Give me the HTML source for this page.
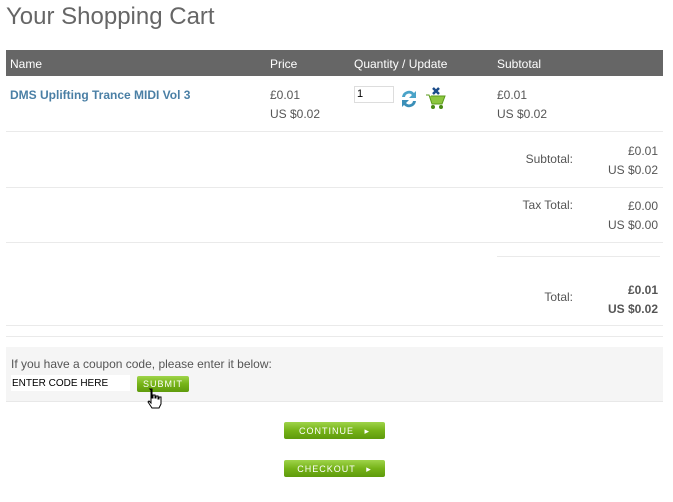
<!DOCTYPE html>
<html><head><meta charset="utf-8"><style>
body{margin:0;width:673px;height:502px;background:#fff;font-family:"Liberation Sans",Arial,sans-serif;font-size:12px;color:#555;position:relative;overflow:hidden}
.a{position:absolute;white-space:nowrap}
.hr{position:absolute;height:1px;background:#eaeaea}
.r{text-align:right}
.btn{position:absolute;height:17px;border-radius:2px;background:linear-gradient(#9fd44a,#76b318 50%,#5e9a0c);color:#fff;font-size:9px;letter-spacing:1px;line-height:17px;text-align:center}
</style></head><body>
<div class="a" style="left:6px;top:3px;font-size:24px;color:#666">Your Shopping Cart</div>
<div class="a" style="left:6px;top:50px;width:657px;height:26px;background:#666"></div>
<div class="a" style="left:10px;top:57px;color:#fff">Name</div>
<div class="a" style="left:270px;top:57px;color:#fff">Price</div>
<div class="a" style="left:354px;top:57px;color:#fff">Quantity / Update</div>
<div class="a" style="left:497px;top:57px;color:#fff">Subtotal</div>
<div class="a" style="left:10px;top:88px;color:#4a7fa5;font-weight:bold">DMS Uplifting Trance MIDI Vol 3</div>
<div class="a" style="left:270px;top:86px;line-height:19px">£0.01<br>US $0.02</div>
<div class="a" style="left:354px;top:86px;border:1px solid #ddd;font-size:11px;color:#000;line-height:15px;padding-left:2px;box-sizing:border-box;width:40px;height:17px">1</div>
<svg class="a" style="left:399px;top:88px" width="20" height="22" viewBox="0 0 20 22"><path d="M3 9a7 7 0 0 1 12-4l2-2v7h-7l3-3a4 4 0 0 0-7 2z" fill="#4aa3c8"/><path d="M17 13a7 7 0 0 1-12 4l-2 2v-7h7l-3 3a4 4 0 0 0 7-2z" fill="#3b8fb8"/></svg>
<svg class="a" style="left:425px;top:86px" width="22" height="24" viewBox="0 0 22 24"><path d="M8 2l6 6M14 2l-6 6" stroke="#1b4c8a" stroke-width="2.5"/><path d="M1 9h3l3 9h10l3-8H6" fill="#8cc63f" stroke="#5a9a1a"/><circle cx="8" cy="21" r="2" fill="#4a8a14"/><circle cx="16" cy="21" r="2" fill="#4a8a14"/></svg>
<div class="a" style="left:497px;top:86px;line-height:19px">£0.01<br>US $0.02</div>
<div class="hr" style="left:6px;top:131px;width:657px"></div>
<div class="a r" style="left:480px;top:152px;width:93px">Subtotal:</div>
<div class="a r" style="left:580px;top:142px;width:78px;line-height:19px">£0.01<br>US $0.02</div>
<div class="hr" style="left:6px;top:187px;width:657px"></div>
<div class="a r" style="left:480px;top:198px;width:93px">Tax Total:</div>
<div class="a r" style="left:580px;top:197px;width:78px;line-height:19px">£0.00<br>US $0.00</div>
<div class="hr" style="left:6px;top:242px;width:657px"></div>
<div class="hr" style="left:497px;top:256px;width:163px"></div>
<div class="a r" style="left:480px;top:290px;width:93px">Total:</div>
<div class="a r" style="left:580px;top:281px;width:78px;line-height:19px;font-weight:bold">£0.01<br>US $0.02</div>
<div class="hr" style="left:6px;top:325px;width:657px"></div>
<div class="hr" style="left:6px;top:336px;width:657px"></div>
<div class="a" style="left:6px;top:347px;width:657px;height:54px;background:#f5f5f5;border-bottom:1px solid #e8e8e8"></div>
<div class="a" style="left:11px;top:357px">If you have a coupon code, please enter it below:</div>
<div class="a" style="left:11px;top:375px;width:118px;height:16px;background:#fff;color:#000;font-size:10px;line-height:17px;padding-left:1px">ENTER CODE HERE</div>
<div class="btn" style="left:137px;top:376px;width:52px;height:16px;line-height:16px">SUBMIT</div>
<svg class="a" style="left:145px;top:388px" width="18" height="22" viewBox="0 0 18 22"><path d="M5 1h2v9h1V7h2v3h1V8h2v3h1V9h2v7l-2 4H7l-4-6 1-1 2 2V2z" fill="#fff" stroke="#000"/></svg>
<div class="btn" style="left:284px;top:422px;width:101px;line-height:19px">CONTINUE&nbsp;&nbsp;&nbsp;▸</div>
<div class="btn" style="left:284px;top:460px;width:101px;line-height:19px">CHECKOUT&nbsp;&nbsp;&nbsp;▸</div>
</body></html>
